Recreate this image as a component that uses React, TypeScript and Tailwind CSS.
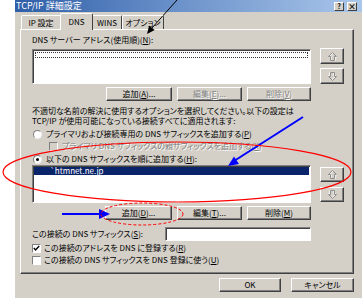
import React from "react";

const FONT = "font-['Noto_Sans_CJK_JP','Liberation_Sans',sans-serif] [font-feature-settings:'palt']";

function Btn({ children, w, disabled }: { children: React.ReactNode; w: string; disabled?: boolean }) {
  return (
    <div
      className={`${w} h-[14px] flex items-center justify-center bg-[#d4d0c8] border border-t-white border-l-white border-b-[#404040] border-r-[#404040] shadow-[inset_-1px_-1px_0_#808080] ${
        disabled ? "text-[#808080] [text-shadow:1px_1px_0_#fff]" : "text-black"
      }`}
    >
      {children}
    </div>
  );
}

function Arrow({ up, h }: { up?: boolean; h: string }) {
  return (
    <div className={`w-[24px] ${h} flex items-center justify-center bg-[#d4d0c8] border border-t-white border-l-white border-b-[#404040] border-r-[#404040] shadow-[inset_-1px_-1px_0_#808080]`}>
      <svg width="9" height="9" viewBox="0 0 9 9" className={up ? "" : "rotate-180"}>
        <path d="M4.5 0.5 L8.5 4.5 L6.5 4.5 L6.5 8.5 L2.5 8.5 L2.5 4.5 L0.5 4.5 Z" fill="none" stroke="#ffffff" strokeWidth="1" transform="translate(0.6 0.6)" />
        <path d="M4.5 0.5 L8.5 4.5 L6.5 4.5 L6.5 8.5 L2.5 8.5 L2.5 4.5 L0.5 4.5 Z" fill="none" stroke="#8c8c8c" strokeWidth="1" />
      </svg>
    </div>
  );
}

function Radio({ checked }: { checked?: boolean }) {
  return (
    <div className="w-[9px] h-[9px] rounded-full bg-white border border-t-[#808080] border-l-[#808080] border-b-[#ececec] border-r-[#ececec] flex items-center justify-center shrink-0">
      {checked && <div className="w-[3px] h-[3px] rounded-full bg-black" />}
    </div>
  );
}

function Check({ checked, disabled }: { checked?: boolean; disabled?: boolean }) {
  return (
    <div
      className={`w-[9px] h-[9px] ${disabled ? "bg-[#d4d0c8]" : "bg-white"} border border-t-[#808080] border-l-[#808080] border-b-white border-r-white flex items-center justify-center shrink-0`}
    >
      {checked && (
        <svg width="7" height="7" viewBox="0 0 7 7">
          <path d="M0.8 3 L2.6 5 L6.2 1" fill="none" stroke="#000" strokeWidth="1.4" />
        </svg>
      )}
    </div>
  );
}

function Sunken({ className, children }: { className: string; children?: React.ReactNode }) {
  return (
    <div className={`${className} bg-white border border-t-[#808080] border-l-[#808080] border-b-white border-r-white shadow-[inset_1px_1px_0_#404040]`}>
      {children}
    </div>
  );
}

export default function App() {
  return (
    <div className={`relative w-[362px] h-[298px] overflow-hidden bg-white flex text-black ${FONT} text-[8px] leading-[10px]`}>
      <div className="w-[14px] shrink-0" />
      <div className="flex-1 bg-[#d4d0c8] border-l border-l-white flex flex-col">
        {/* title bar */}
        <div className="h-[12px] flex items-center justify-between pl-[1px] pr-[5px] bg-gradient-to-r from-[#2f5fa8] via-[#6f95cc] to-[#aac6ea]">
          <span className="text-white text-[9px] leading-[12px]">TCP/IP 詳細設定</span>
          <div className="flex gap-[3px]">
            <div className="w-[10px] h-[9px] bg-[#d4d0c8] border border-t-white border-l-white border-b-[#404040] border-r-[#404040] flex items-center justify-center text-[7px] leading-[7px] font-bold">?</div>
            <div className="w-[10px] h-[9px] bg-[#d4d0c8] border border-t-white border-l-white border-b-[#404040] border-r-[#404040] flex items-center justify-center text-[8px] leading-[7px] font-bold">×</div>
          </div>
        </div>

        <div className="pl-[5px] pt-[1px]">
          {/* tabs */}
          <div className="flex items-end h-[16px] pl-[1px] relative z-10">
            <div className="h-[14px] w-[39px] flex items-center justify-center border-t border-l border-t-white border-l-white rounded-tl-[2px]">IP 設定</div>
            <div className="h-[17px] w-[33px] -mb-[1px] bg-[#d4d0c8] flex items-start pt-[3px] justify-center border-t border-l border-r border-t-white border-l-white border-r-[#404040] rounded-t-[2px]">DNS</div>
            <div className="h-[14px] w-[29px] flex items-center justify-center border-t border-r border-t-white border-r-[#404040] rounded-tr-[2px]">WINS</div>
            <div className="h-[14px] w-[42px] flex items-center justify-center border-t border-l border-r border-t-white border-l-white border-r-[#404040] rounded-t-[2px]">オプション</div>
          </div>

          {/* panel */}
          <div className="w-[334px] h-[245px] border border-t-white border-l-white border-b-[#404040] border-r-[#404040] shadow-[inset_-1px_-1px_0_#808080] pl-[11px] pt-[5px] flex flex-col">
            <div>
              DNS サーバー アドレス(使用順)(<u>N</u>):
            </div>
            <div className="mt-[4px] flex items-start gap-[9px]">
              <Sunken className="w-[279px] h-[35px] p-[2px]">
                <div className="h-[6px] border border-dotted border-[#333]" />
              </Sunken>
              <div className="-mt-[1px] flex flex-col gap-[4px]">
                <Arrow up h="h-[16px]" />
                <Arrow h="h-[16px]" />
              </div>
            </div>
            <div className="mt-[3px] w-[279px] flex justify-end gap-[5px]">
              <Btn w="w-[66px]">追加(<u>A</u>)...</Btn>
              <Btn w="w-[65px]" disabled>編集(<u>E</u>)...</Btn>
              <Btn w="w-[64px]" disabled>削除(<u>V</u>)</Btn>
            </div>
            <div className="mt-[5px]">
              <div>不適切な名前の解決に使用するオプションを選択してください。以下の設定は</div>
              <div>TCP/IP が使用可能になっている接続すべてに適用されます:</div>
            </div>
            <div className="mt-[2px] h-[12px] flex items-center gap-[4px] pl-[1px]">
              <Radio />
              <span>プライマリおよび接続専用の DNS サフィックスを追加する(<u>P</u>)</span>
            </div>
            <div className="h-[12px] flex items-center gap-[4px] pl-[17px]">
              <Check disabled />
              <span className="text-[#808080] [text-shadow:1px_1px_0_#fff]">プライマリ DNS サフィックスの親サフィックスを追加する(<u>X</u>)</span>
            </div>
            <div className="mt-[1px] h-[12px] flex items-center gap-[4px] pl-[1px]">
              <Radio checked />
              <span>以下の DNS サフィックスを順に追加する(<u>H</u>):</span>
            </div>
            <div className="flex items-start gap-[9px]">
              <Sunken className="w-[279px] h-[38px] p-[1px]">
                <div className="h-[8px] bg-[#0a246a] text-white text-[8px] leading-[8px] pl-[16px]">`htmnet.ne.jp</div>
              </Sunken>
              <div className="mt-[2px] flex flex-col gap-[5px]">
                <Arrow up h="h-[15px]" />
                <Arrow h="h-[15px]" />
              </div>
            </div>
            <div className="mt-[3px] w-[279px] flex justify-end gap-[5px]">
              <Btn w="w-[67px]">追加(<u>D</u>)...</Btn>
              <Btn w="w-[65px]">編集(<u>T</u>)...</Btn>
              <Btn w="w-[64px]">削除(<u>M</u>)</Btn>
            </div>
            <div className="mt-[7px] w-[279px] h-[14px] flex items-center justify-between">
              <span>この接続の DNS サフィックス(<u>S</u>):</span>
              <Sunken className="w-[146px] h-[14px]" />
            </div>
            <div className="mt-[1px] h-[12px] flex items-center gap-[3px]">
              <Check checked />
              <span>この接続のアドレスを DNS に登録する(<u>R</u>)</span>
            </div>
            <div className="h-[12px] flex items-center gap-[3px]">
              <Check />
              <span>この接続の DNS サフィックスを DNS 登録に使う(<u>U</u>)</span>
            </div>
          </div>
        </div>

        {/* bottom buttons */}
        <div className="mt-[4px] flex justify-end gap-[10px] pr-[8px]">
          <Btn w="w-[62px]">OK</Btn>
          <Btn w="w-[63px]">キャンセル</Btn>
        </div>
      </div>

      {/* annotations */}
      <svg className="absolute inset-0 pointer-events-none" width="362" height="298" viewBox="0 0 362 298">
        <line x1="177" y1="0" x2="152" y2="28" stroke="#000" strokeWidth="1" />
        <polygon points="147,34 154.7,29.9 149.1,25.5" fill="#000" />
        <line x1="303" y1="117" x2="234" y2="161" stroke="#0000ff" strokeWidth="2" />
        <polygon points="228,166 239,164 234,156.5" fill="#0000ff" />
        <line x1="62" y1="214" x2="100" y2="214" stroke="#0000ff" strokeWidth="2" />
        <polygon points="110,214 99,209 99,219" fill="#0000ff" />
        <ellipse cx="177" cy="172" rx="174" ry="30" fill="none" stroke="#ff0000" strokeWidth="1.2" />
        <ellipse cx="142" cy="214" rx="41" ry="11" fill="none" stroke="#ff0000" strokeWidth="1" strokeDasharray="3 2" />
      </svg>
    </div>
  );
}
